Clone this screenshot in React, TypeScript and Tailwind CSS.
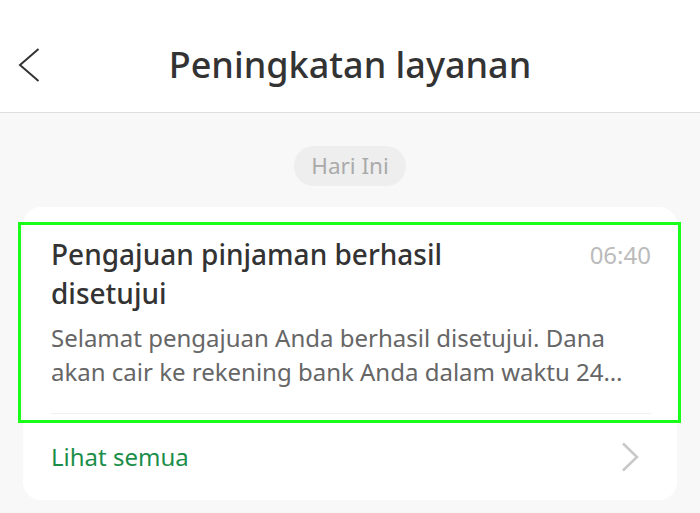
import React from "react";

export default function App() {
  return (
    <div
      className="w-[700px] h-[513px] bg-[#f8f8f8] overflow-hidden flex flex-col"
      style={{ fontFamily: '"Noto Sans", "Open Sans", sans-serif' }}
    >
      <header className="h-[113px] shrink-0 bg-white border-b border-[#dddddd] grid grid-cols-[1fr_auto_1fr] items-center pt-[18px]">
        <div className="pl-[18px] flex items-center">
          <svg width="22" height="34" viewBox="0 0 22 34" fill="none">
            <path d="M20.5 1 L2 17 L20.5 33" stroke="#333333" strokeWidth="2" strokeLinejoin="miter" />
          </svg>
        </div>
        <h1 className="text-[36px] leading-[40px] text-[#333333] font-medium">Peningkatan layanan</h1>
        <div />
      </header>

      <div className="flex justify-center pt-[33px]">
        <div className="h-[40px] px-[17px] rounded-full bg-[#eeeeee] flex items-center text-[22.5px] text-[#aaaaaa]">
          Hari Ini
        </div>
      </div>

      <div className="relative mx-[23px] mt-[21px] rounded-[18px] bg-white">
        <div className="px-[28px] pr-[26px] pt-[28px]">
          <div className="flex justify-between items-start gap-4">
            <div className="text-[28px] leading-[39px] text-[#333333] font-medium w-[440px]">
              Pengajuan pinjaman berhasil disetujui
            </div>
            <div className="text-[24px] leading-[40px] text-[#bbbbbb]">06:40</div>
          </div>
          <p className="mt-[8px] text-[24px] leading-[34px] text-[#666666]">
            Selamat pengajuan Anda berhasil disetujui. Dana akan cair ke rekening bank Anda dalam waktu 24…
          </p>
          <div className="mt-[24px] h-px bg-[#f0f0f0]" />
        </div>
        <div className="h-[86px] pl-[28px] pr-[38px] flex items-center justify-between">
          <span className="text-[24px] text-[#1b8f4a]">Lihat semua</span>
          <svg width="18" height="30" viewBox="0 0 18 30" fill="none">
            <path d="M2 1.5 L16 15 L2 28.5" stroke="#c8c8c8" strokeWidth="2.5" />
          </svg>
        </div>
        <div className="absolute left-[-5px] top-[15px] w-[663px] h-[201px] border-[3px] border-[#1aff1a] pointer-events-none" />
      </div>
    </div>
  );
}
